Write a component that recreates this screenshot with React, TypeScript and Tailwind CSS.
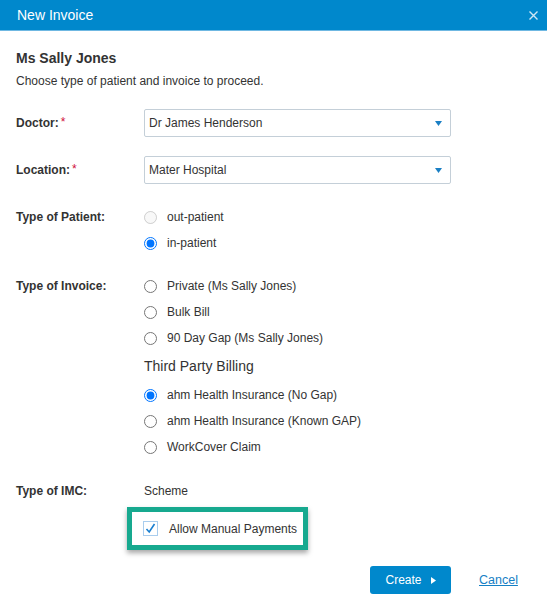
import type { ReactNode } from "react";

const FONT = "font-['Liberation_Sans',Arial,Helvetica,sans-serif]";

function Label({ children, required }: { children: ReactNode; required?: boolean }) {
  return (
    <div className="w-[128px] shrink-0 text-[12px] font-bold text-[#333] leading-[16px]">
      {children}
      {required && <span className="ml-[2px] text-[#d0103a] font-normal relative -top-[1px]">*</span>}
    </div>
  );
}

function Select({ value }: { value: string }) {
  return (
    <div className="w-[307px] h-[28px] border border-[#c4cfd8] rounded-[2px] bg-white flex items-center justify-between pl-[4px] pr-[8px]">
      <span className="text-[12px] text-[#333]">{value}</span>
      <svg width="7" height="5" viewBox="0 0 7 5">
        <path d="M0 0 L7 0 L3.5 5 Z" fill="#1a7fc4" />
      </svg>
    </div>
  );
}

function Radio({
  label,
  checked,
  disabled,
}: {
  label: string;
  checked?: boolean;
  disabled?: boolean;
}) {
  return (
    <label className="h-[26px] flex items-center gap-[10px]">
      <input
        type="radio"
        readOnly
        checked={!!checked}
        disabled={disabled}
        className="w-[13px] h-[13px] m-0"
      />
      <span className="text-[12px] text-[#333]">{label}</span>
    </label>
  );
}

export default function App() {
  return (
    <div className={`${FONT} w-[547px] h-[602px] bg-white text-[#333] overflow-hidden`}>
      <div className="h-[31px] bg-[#0088cc] border-b border-[#6fb8e2] flex items-center justify-between pl-[17px] pr-[9px]">
        <span className="text-[14px] text-white">New Invoice</span>
        <svg width="9" height="9" viewBox="0 0 9 9">
          <path d="M0.5 0.5 L8.5 8.5 M8.5 0.5 L0.5 8.5" stroke="#cde6f5" strokeWidth="1.4" />
        </svg>
      </div>

      <div className="px-4">
        <h2 className="mt-[17px] text-[14px] font-bold leading-[20px] text-[#333]">Ms Sally Jones</h2>
        <p className="mt-[5px] text-[12px] leading-[16px] text-[#333]">Choose type of patient and invoice to proceed.</p>

        <div className="mt-[20px] flex items-center">
          <Label required>Doctor:</Label>
          <Select value="Dr James Henderson" />
        </div>

        <div className="mt-[19px] flex items-center">
          <Label required>Location:</Label>
          <Select value="Mater Hospital" />
        </div>

        <div className="mt-[20px] flex">
          <div className="pt-[5px]">
            <Label>Type of Patient:</Label>
          </div>
          <div className="flex flex-col">
            <Radio label="out-patient" disabled />
            <Radio label="in-patient" checked />
          </div>
        </div>

        <div className="mt-[17px] flex">
          <div className="pt-[5px]">
            <Label>Type of Invoice:</Label>
          </div>
          <div className="flex flex-col">
            <Radio label="Private (Ms Sally Jones)" />
            <Radio label="Bulk Bill" />
            <Radio label="90 Day Gap (Ms Sally Jones)" />
            <div className="mt-[5px] text-[14px] leading-[20px] text-[#333]">Third Party Billing</div>
            <div className="mt-[6px] flex flex-col">
              <Radio label="ahm Health Insurance (No Gap)" checked />
              <Radio label="ahm Health Insurance (Known GAP)" />
              <Radio label="WorkCover Claim" />
            </div>
          </div>
        </div>

        <div className="mt-[21px] flex items-center h-[20px]">
          <Label>Type of IMC:</Label>
          <span className="text-[12px] text-[#333]">Scheme</span>
        </div>

        <div className="mt-[6px] ml-[111px] w-[181px] h-[43px] border-[5px] border-[#17a98f] bg-white shadow-[0_3px_5px_rgba(0,0,0,0.35)] flex items-center pl-[11px] gap-[11px]">
          <span className="w-[15px] h-[15px] border border-[#a9cdee] bg-white flex items-center justify-center">
            <svg width="11" height="11" viewBox="0 0 11 11">
              <path d="M1.5 6 L4.2 9 L9.5 1" fill="none" stroke="#1a7fd0" strokeWidth="1.6" />
            </svg>
          </span>
          <span className="text-[12px] text-[#333]">Allow Manual Payments</span>
        </div>

        <div className="mt-[16px] flex items-center">
          <button className="ml-[354px] w-[81px] h-[28px] bg-[#0088cc] rounded-[3px] text-white text-[12px] flex items-center justify-center gap-[9px]">
            <span>Create</span>
            <svg width="5" height="7" viewBox="0 0 5 7">
              <path d="M0 0 L5 3.5 L0 7 Z" fill="white" />
            </svg>
          </button>
          <a href="#" className="ml-[28px] text-[12.5px] text-[#1580c5] underline">Cancel</a>
        </div>
      </div>
    </div>
  );
}
